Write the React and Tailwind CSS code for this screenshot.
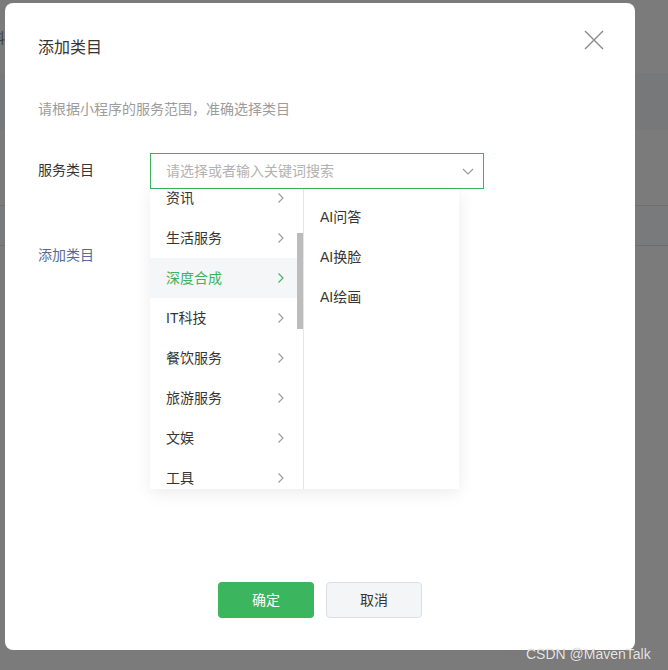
import React from "react";

const font = { fontFamily: '"Liberation Sans", "Noto Sans CJK SC", sans-serif' };

function ChevronRight({ color = "#9a9a9a" }) {
  return (
    <svg width="8" height="12" viewBox="0 0 8 12" fill="none">
      <path d="M1.5 1.5 L6 6 L1.5 10.5" stroke={color} strokeWidth="1.1" />
    </svg>
  );
}

export default function App() {
  const left = ["资讯", "生活服务", "深度合成", "IT科技", "餐饮服务", "旅游服务", "文娱", "工具"];
  const right = ["AI问答", "AI换脸", "AI绘画"];
  return (
    <div className="relative w-[668px] h-[670px] overflow-hidden bg-[#7b7b7b]" style={font}>
      {/* background page (dimmed) */}
      <div className="flex flex-col w-full">
        <div className="h-[73px] pt-[28px] text-[14px] text-[#3a3a3a]">
          <span className="-ml-[9px]">料</span>
        </div>
        <div className="h-[57px] bg-[#77787a]"></div>
        <div className="h-[76px] border-b border-[#6e6e6e]"></div>
        <div className="h-[40px] border-b border-[#6e6e6e] bg-[#797a7b]"></div>
      </div>

      {/* modal */}
      <div className="absolute left-[5px] top-[3px] w-[630px] h-[647px] bg-white rounded-[8px] flex flex-col">
        <div className="flex items-start justify-between pl-[33px] pr-[30px] pt-[33px]">
          <div className="text-[16px] leading-[24px] text-[#353535]">添加类目</div>
          <svg width="22" height="22" viewBox="0 0 22 22" className="mt-[-7px]">
            <path d="M2 2 L20 20 M20 2 L2 20" stroke="#8a8a8a" strokeWidth="1.4" />
          </svg>
        </div>
        <div className="pl-[33px] mt-[39px] text-[14px] leading-[20px] text-[#9c9c9c]">
          请根据小程序的服务范围，准确选择类目
        </div>
        <div className="flex pl-[33px] mt-[34px]">
          <div className="w-[112px] pt-[7px] text-[14px] leading-[20px] text-[#353535]">服务类目</div>
          <div className="relative">
            <div className="w-[334px] h-[36px] border border-[#3cb35d] flex items-center justify-between pl-[15px] pr-[9px]">
              <span className="text-[14px] text-[#b2b2b2]">请选择或者输入关键词搜索</span>
              <svg width="12" height="7" viewBox="0 0 12 7">
                <path d="M1 1 L6 6 L11 1" stroke="#9a9a9a" strokeWidth="1.1" fill="none" />
              </svg>
            </div>
            {/* dropdown */}
            <div className="absolute left-0 top-[36px] w-[309px] h-[300px] bg-white flex shadow-[0_4px_16px_rgba(0,0,0,0.08)] z-10">
              <div className="relative w-[154px] h-full overflow-hidden border-r border-[#e5e5e5]">
                <div className="-mt-[11px]">
                  {left.map((t, i) => (
                    <div
                      key={t}
                      className={
                        "h-[40px] flex items-center justify-between pl-[16px] pr-[18px] text-[14px] " +
                        (i === 2 ? "bg-[#f5f6f7] text-[#3cb35d]" : "text-[#353535]")
                      }
                    >
                      <span>{t}</span>
                      <ChevronRight color={i === 2 ? "#3cb35d" : "#9a9a9a"} />
                    </div>
                  ))}
                </div>
                <div className="absolute right-0 top-[44px] w-[6px] h-[96px] bg-[#bcbcbc]"></div>
              </div>
              <div className="flex-1 pt-[8px]">
                {right.map((t) => (
                  <div key={t} className="h-[40px] flex items-center pl-[16px] text-[14px] text-[#353535]">
                    {t}
                  </div>
                ))}
              </div>
            </div>
          </div>
        </div>
        <div className="pl-[33px] mt-[56px] text-[14px] leading-[20px] text-[#576b95]">添加类目</div>
        <div className="flex-1"></div>
        <div className="flex justify-center gap-[12px] pb-[32px]">
          <button className="w-[96px] h-[36px] rounded-[4px] bg-[#3cb55f] text-white text-[14px]">确定</button>
          <button className="w-[96px] h-[36px] rounded-[4px] bg-[#f4f5f7] border border-[#dcdee2] text-[#353535] text-[14px]">
            取消
          </button>
        </div>
      </div>

      <div className="absolute left-[526px] top-[644px] text-[14px] leading-[20px] text-[#e8e8e8] [text-shadow:0_0_1px_rgba(0,0,0,0.3)]">
        CSDN @MavenTalk
      </div>
    </div>
  );
}
